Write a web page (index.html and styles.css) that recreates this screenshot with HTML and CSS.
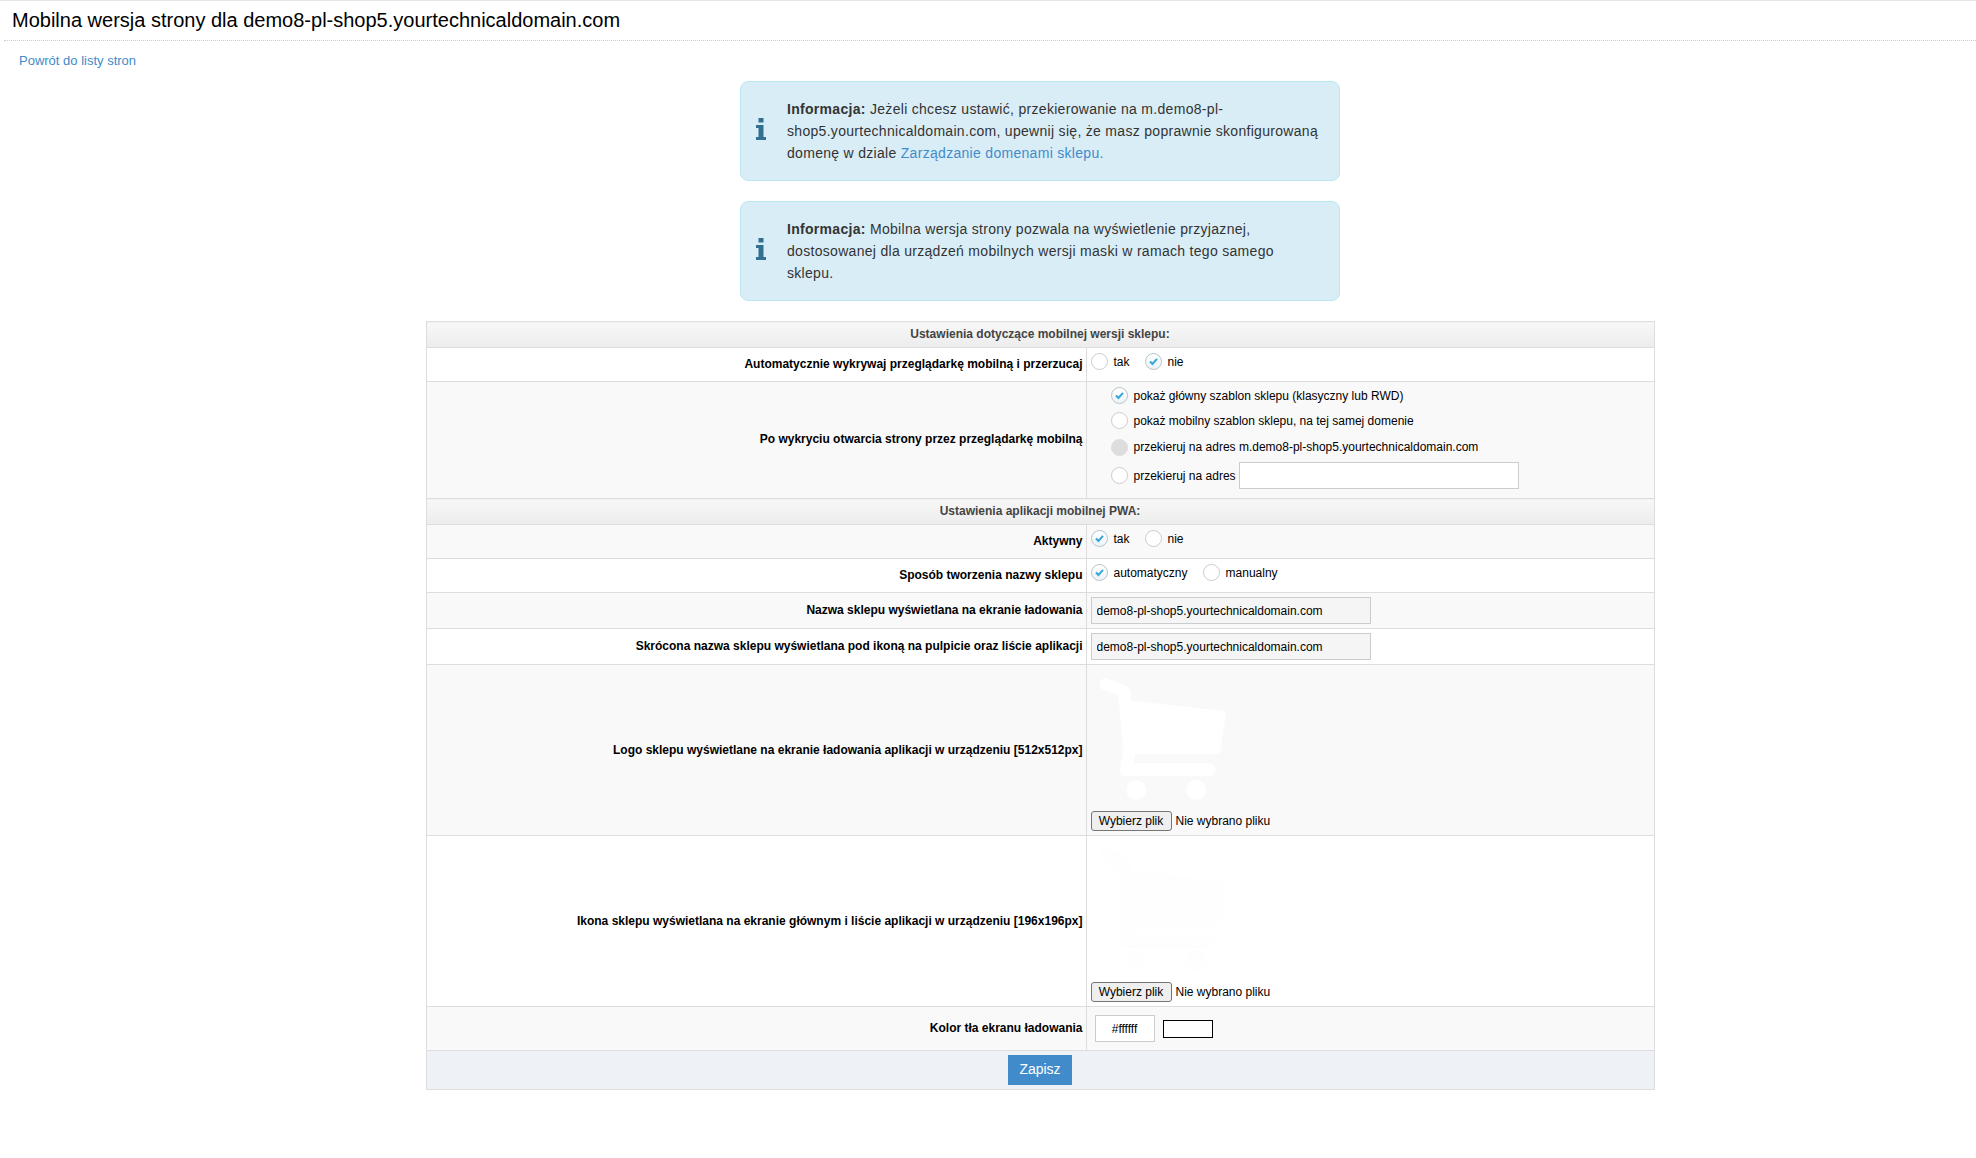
FILE: index.html
```html
<!DOCTYPE html>
<html lang="pl">
<head>
  <meta charset="UTF-8">
  <title>Mobilna wersja strony</title>
  <link rel="stylesheet" href="styles.css">
</head>
<body>
  <h1 class="page-title">Mobilna wersja strony dla demo8-pl-shop5.yourtechnicaldomain.com</h1>
  <div class="back"><a href="#">Powrót do listy stron</a></div>

  <div class="content">
    <div class="alert">
      <svg class="alert-icon" viewBox="0 0 10 22"><path d="M2.5 0h5v4.500h-5zM0 7h7.500v12h2.500v3h-10v-3h2.500v-9h-2.500z"/></svg>
      <p><strong>Informacja:</strong> Jeżeli chcesz ustawić, przekierowanie na m.demo8-pl-shop5.yourtechnicaldomain.com, upewnij się, że masz poprawnie skonfigurowaną domenę w dziale <a href="#">Zarządzanie domenami sklepu.</a></p>
    </div>
    <div class="alert">
      <svg class="alert-icon" viewBox="0 0 10 22"><path d="M2.5 0h5v4.500h-5zM0 7h7.500v12h2.500v3h-10v-3h2.500v-9h-2.500z"/></svg>
      <p><strong>Informacja:</strong> Mobilna wersja strony pozwala na wyświetlenie przyjaznej, dostosowanej dla urządzeń mobilnych wersji maski w ramach tego samego sklepu.</p>
    </div>

    <table class="settings">
      <tbody>
        <tr class="section"><th colspan="2">Ustawienia dotyczące mobilnej wersji sklepu:</th></tr>
        <tr class="row-short">
          <td class="label">Automatycznie wykrywaj przeglądarkę mobilną i przerzucaj</td>
          <td>
            <div class="choices">
              <label class="choice"><span class="radio"></span>tak</label>
              <label class="choice"><span class="radio checked"><svg viewBox="0 0 17 17"><path d="M4.500 8.500l2.800 2.700 5.200-5.700"/></svg></span>nie</label>
            </div>
          </td>
        </tr>
        <tr class="alt">
          <td class="label">Po wykryciu otwarcia strony przez przeglądarkę mobilną</td>
          <td>
            <div class="options">
              <label class="choice option"><span class="radio checked"><svg viewBox="0 0 17 17"><path d="M4.500 8.500l2.800 2.700 5.200-5.700"/></svg></span>pokaż główny szablon sklepu (klasyczny lub RWD)</label>
              <label class="choice option"><span class="radio"></span>pokaż mobilny szablon sklepu, na tej samej domenie</label>
              <label class="choice option option-tall"><span class="radio disabled"></span>przekieruj na adres m.demo8-pl-shop5.yourtechnicaldomain.com</label>
              <label class="choice option option-input"><span class="radio"></span>przekieruj na adres <input class="field" type="text"></label>
            </div>
          </td>
        </tr>
        <tr class="section"><th colspan="2">Ustawienia aplikacji mobilnej PWA:</th></tr>
        <tr class="row-short alt">
          <td class="label">Aktywny</td>
          <td>
            <div class="choices">
              <label class="choice"><span class="radio checked"><svg viewBox="0 0 17 17"><path d="M4.500 8.500l2.800 2.700 5.200-5.700"/></svg></span>tak</label>
              <label class="choice"><span class="radio"></span>nie</label>
            </div>
          </td>
        </tr>
        <tr class="row-short">
          <td class="label">Sposób tworzenia nazwy sklepu</td>
          <td>
            <div class="choices">
              <label class="choice"><span class="radio checked"><svg viewBox="0 0 17 17"><path d="M4.500 8.500l2.800 2.700 5.200-5.700"/></svg></span>automatyczny</label>
              <label class="choice"><span class="radio"></span>manualny</label>
            </div>
          </td>
        </tr>
        <tr class="row-field alt">
          <td class="label">Nazwa sklepu wyświetlana na ekranie ładowania</td>
          <td><input class="field readonly" type="text" value="demo8-pl-shop5.yourtechnicaldomain.com" readonly></td>
        </tr>
        <tr class="row-field">
          <td class="label">Skrócona nazwa sklepu wyświetlana pod ikoną na pulpicie oraz liście aplikacji</td>
          <td><input class="field readonly" type="text" value="demo8-pl-shop5.yourtechnicaldomain.com" readonly></td>
        </tr>
        <tr class="alt">
          <td class="label label-upload">Logo sklepu wyświetlane na ekranie ładowania aplikacji w urządzeniu [512x512px]</td>
          <td class="upload">
            <svg class="cart" viewBox="93 0 420 399"><path d="M135 25L195 45Q210 50 212 70L214 92L485 122Q498 125 497 137L482 238Q480 252 465 252L226 252L222 280L448 280A19 19 0 0 1 448 318L198 318Q178 318 180 298L190 238L175 76L132 60A18 18 0 0 1 135 25Z"/><circle cx="229" cy="360" r="30"/><circle cx="409" cy="360" r="30"/></svg>
            <div class="file"><button type="button">Wybierz plik</button><span>Nie wybrano pliku</span></div>
          </td>
        </tr>
        <tr>
          <td class="label label-upload">Ikona sklepu wyświetlana na ekranie głównym i liście aplikacji w urządzeniu [196x196px]</td>
          <td class="upload">
            <svg class="cart cart-faint" viewBox="93 0 420 399"><path d="M135 25L195 45Q210 50 212 70L214 92L485 122Q498 125 497 137L482 238Q480 252 465 252L226 252L222 280L448 280A19 19 0 0 1 448 318L198 318Q178 318 180 298L190 238L175 76L132 60A18 18 0 0 1 135 25Z"/><circle cx="229" cy="360" r="30"/><circle cx="409" cy="360" r="30"/></svg>
            <div class="file"><button type="button">Wybierz plik</button><span>Nie wybrano pliku</span></div>
          </td>
        </tr>
        <tr class="row-color alt">
          <td class="label">Kolor tła ekranu ładowania</td>
          <td>
            <div class="color">
              <input class="field color-value" type="text" value="#ffffff">
              <span class="swatch"></span>
            </div>
          </td>
        </tr>
        <tr class="actions">
          <td colspan="2"><button class="save" type="button">Zapisz</button></td>
        </tr>
      </tbody>
    </table>
  </div>
</body>
</html>
```

FILE: styles.css
```css
body {
  margin: 0;
  border-top: 1px solid #e5e5e5;
  background: #fff;
  color: #333;
  font-family: "Liberation Sans", Arial, sans-serif;
  font-size: 12px;
}

a {
  color: #428bca;
  text-decoration: none;
}

.page-title {
  margin: 0 0 0 4px;
  height: 39px;
  padding: 0 8px;
  border-bottom: 1px dotted #ccc;
  color: #000;
  font-size: 20px;
  font-weight: normal;
  line-height: 38px;
}

.back {
  padding: 13px 19px 0;
  height: 27px;
  font-size: 13px;
  line-height: 14px;
}

/* the form is centred in a column that starts 104px in */
.content {
  padding-left: 104px;
}

.alert {
  display: flex;
  align-items: center;
  box-sizing: border-box;
  width: 600px;
  height: 100px;
  margin: 0 auto 20px;
  padding: 0 18px 0 15px;
  background: #d9edf7;
  border: 1px solid #bce8f1;
  border-radius: 8px;
  font-size: 14px;
  letter-spacing: 0.3px;
  line-height: 22px;
}

.alert p {
  margin: 0;
}

.alert-icon {
  flex: none;
  width: 10px;
  height: 22px;
  margin: 0 21px 4px 0;
  fill: #31708f;
}

.settings {
  width: 1229px;
  margin: 0 auto;
  border-collapse: collapse;
  border: 1px solid #ddd;
  color: #000;
}

.settings td,
.settings th {
  border: 1px solid #ddd;
  padding: 0 4px;
}

.section th {
  height: 23px;
  padding: 0 0 2px;
  background: linear-gradient(#f8f8f8, #ececec);
  color: #444;
  font-weight: bold;
  text-align: center;
}

.alt td {
  background: #f9f9f9;
}

.settings .label {
  width: 652px;
  padding-right: 3px;
  padding-bottom: 2px;
  font-weight: bold;
  text-align: right;
}

.settings .label-upload {
  padding-bottom: 0;
}

.row-short td {
  height: 31px;
}

.row-field td {
  height: 35px;
}

.settings .row-field .label {
  height: 33px;
}

.row-color td {
  height: 43px;
}

.settings .row-color .label {
  height: 41px;
}

.choices {
  display: flex;
  gap: 15px;
  padding-bottom: 6px;
}

.choice {
  display: flex;
  align-items: center;
  gap: 6px;
}

.radio {
  flex: none;
  box-sizing: border-box;
  width: 17px;
  height: 17px;
  background: #fff;
  border: 1px solid #ccc;
  border-radius: 50%;
}

.radio svg {
  display: block;
  width: 15px;
  height: 15px;
  fill: none;
  stroke: #39a9d8;
  stroke-width: 2.4;
}

.radio.checked {
  border-color: #b5c3cc;
  background: linear-gradient(#fff, #eef3f6);
}

.radio.disabled {
  background: #ddd;
  border-color: #ddd;
}

.options {
  display: flex;
  flex-direction: column;
  box-sizing: border-box;
  height: 116px;
  padding: 1px 0 0 20px;
}

.option {
  flex: none;
  height: 25px;
}

.option-tall {
  height: 26px;
  margin-top: 1px;
}

.option-input {
  height: 29px;
  margin-top: 1px;
}

.option-input .field {
  margin-left: -3px;
}

.field {
  box-sizing: border-box;
  width: 280px;
  height: 27px;
  padding: 0 5px;
  border: 1px solid #ccc;
  background: #fff;
  color: #000;
  font-family: inherit;
  font-size: 12px;
}

.field.readonly {
  display: block;
  background: #f5f5f5;
}

.upload {
  height: 170px;
  vertical-align: top;
}

.cart {
  display: block;
  width: 140px;
  height: 133px;
  margin-top: 5px;
  fill: #fff;
}

.cart-faint {
  fill: #fefefe;
  stroke: #fbfbfb;
}

.file {
  display: flex;
  align-items: center;
  gap: 4px;
  margin-top: 8px;
}

.file button {
  box-sizing: border-box;
  width: 81px;
  height: 20px;
  padding: 0;
  background: #efefef;
  border: 1px solid #767676;
  border-radius: 3px;
  color: #000;
  font-family: inherit;
  font-size: 12px;
}

.color {
  display: flex;
  align-items: center;
  gap: 8px;
  padding-left: 4px;
}

.color-value {
  width: 60px;
  text-align: center;
}

.swatch {
  box-sizing: border-box;
  width: 50px;
  height: 18px;
  background: #fff;
  border: 1px solid #000;
}

.actions td {
  height: 38px;
  padding: 0;
  background: #eef1f6;
  text-align: center;
}

.save {
  display: block;
  width: 64px;
  height: 30px;
  margin: 0 auto;
  padding: 0 0 2px;
  background: #428bca;
  border: 0;
  color: #fff;
  font-family: inherit;
  font-size: 14px;
}
```
